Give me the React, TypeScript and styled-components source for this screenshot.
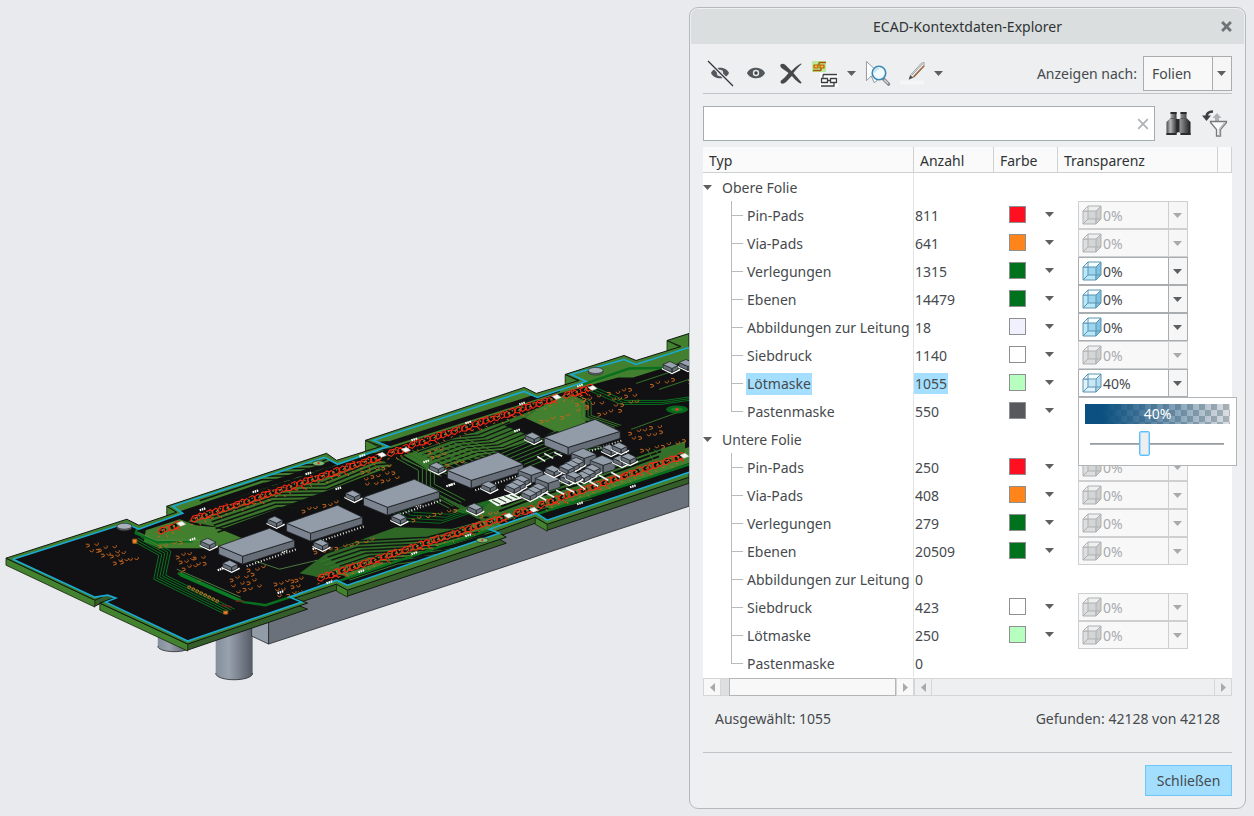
import React, { useState } from 'react';
import styled, { createGlobalStyle, css } from 'styled-components';

const GlobalStyle = createGlobalStyle`
  *, *::before, *::after { box-sizing: border-box; }
  body {
    margin: 0;
    background: #e9eaee;
    color: #464a4d;
    font: 14px/20px "Noto Sans", "Open Sans", sans-serif;
  }
  button, input, select { font: inherit; color: inherit; margin: 0; }
`;

/* ---------- data ---------- */

type Row = {
  name: string;
  count: number;
  color?: string;
  transparency?: number;
  enabled?: boolean;
  selected?: boolean;
};

type Group = { name: string; rows: Row[] };

const groups: Group[] = [
  {
    name: 'Obere Folie',
    rows: [
      { name: 'Pin-Pads', count: 811, color: '#ff0f1f', transparency: 0 },
      { name: 'Via-Pads', count: 641, color: '#ff8419', transparency: 0 },
      { name: 'Verlegungen', count: 1315, color: '#00711c', transparency: 0, enabled: true },
      { name: 'Ebenen', count: 14479, color: '#00711c', transparency: 0, enabled: true },
      { name: 'Abbildungen zur Leitung', count: 18, color: '#f0f0ff', transparency: 0, enabled: true },
      { name: 'Siebdruck', count: 1140, color: '#ffffff', transparency: 0 },
      { name: 'Lötmaske', count: 1055, color: '#b7ffbe', transparency: 40, enabled: true, selected: true },
      { name: 'Pastenmaske', count: 550, color: '#58595d' },
    ],
  },
  {
    name: 'Untere Folie',
    rows: [
      { name: 'Pin-Pads', count: 250, color: '#ff0f1f', transparency: 0 },
      { name: 'Via-Pads', count: 408, color: '#ff8419', transparency: 0 },
      { name: 'Verlegungen', count: 279, color: '#00711c', transparency: 0 },
      { name: 'Ebenen', count: 20509, color: '#00711c', transparency: 0 },
      { name: 'Abbildungen zur Leitung', count: 0 },
      { name: 'Siebdruck', count: 423, color: '#ffffff', transparency: 0 },
      { name: 'Lötmaske', count: 250, color: '#b7ffbe', transparency: 0 },
      { name: 'Pastenmaske', count: 0 },
    ],
  },
];

/* ---------- layout ---------- */

const Page = styled.main`
  display: grid;
  grid-template-columns: minmax(0, 1fr) minmax(520px, 557px);
  align-items: start;
  min-height: 100vh;
  padding-right: 8px;
`;

const Scene = styled.div`
  svg { display: block; width: 100%; height: auto; }
`;

const Dialog = styled.section`
  margin: 7px 0;
  padding: 1px;
  background: #eeeff1;
  border: 1px solid #b5b9bc;
  border-radius: 9px;
`;

const TitleBar = styled.header`
  display: grid;
  grid-template-columns: 36px 1fr 36px;
  align-items: center;
  height: 35px;
  background: #dadede;
  border-radius: 7px 7px 0 0;
`;

const Title = styled.h1`
  grid-column: 2;
  margin: 0;
  padding-top: 1px;
  font-size: 14px;
  font-weight: 400;
  line-height: 20px;
  text-align: center;
  color: #303335;
`;

const IconButton = styled.button`
  display: flex;
  align-items: center;
  justify-content: center;
  flex: none;
  padding: 0;
  border: 0;
  background: none;
  cursor: pointer;
`;

const Content = styled.div`
  padding: 12px 12px 11px;
`;

const Toolbar = styled.div`
  display: flex;
  align-items: center;
  padding-bottom: 2px;
  border-bottom: 1px solid #c1c4c6;
`;

const Tools = styled.div`
  display: flex;
  align-items: center;
  flex: 1;
  gap: 9px;
  padding-left: 4px;
`;

const ViewBy = styled.label`
  display: flex;
  align-items: center;
  gap: 6px;
`;

const SelectBox = styled.span<{ $tall?: boolean; $off?: boolean }>`
  display: grid;
  grid-template-columns: 1fr 19px;
  width: ${(p) => (p.$tall ? 89 : 110)}px;
  height: ${(p) => (p.$tall ? 35 : 28)}px;
  border: 1px solid ${(p) => (p.$off ? '#cdcfd0' : '#a9adaf')};
  background: ${(p) => (p.$tall || p.$off ? '#f8f8f9' : '#fff')};
  color: ${(p) => (p.$off ? '#a9abad' : '#464a4d')};

  > svg { grid-area: 1 / 2; place-self: center; pointer-events: none; }
`;

const NativeSelect = styled.select<{ $indent: number; $off?: boolean }>`
  grid-area: 1 / 1 / 2 / 3;
  width: 100%;
  padding: 1px 0 0 ${(p) => p.$indent}px;
  appearance: none;
  border: 0;
  border-radius: 0;
  color: inherit;
  opacity: 1;
  outline-offset: -2px;
  background: linear-gradient(90deg, ${(p) => (p.$off ? '#cdcfd0' : '#a9adaf')} 1px, #f6f6f7 1px) right / 19px 100% no-repeat;
`;

const CubeSlot = styled.span`
  grid-area: 1 / 1;
  place-self: center start;
  display: flex;
  padding-left: 3px;
  pointer-events: none;
`;

const SearchRow = styled.div`
  display: flex;
  align-items: center;
  gap: 10px;
  margin: 12px 4px 6px 0;
`;

const SearchField = styled.div`
  display: flex;
  flex: 1;
  align-items: center;
  height: 35px;
  padding-right: 5px;
  background: #fff;
  border: 1px solid #a2afae;
`;

const SearchInput = styled.input`
  flex: 1;
  min-width: 0;
  height: 100%;
  padding: 0 8px;
  border: 0;
  background: transparent;
`;

const Table = styled.table`
  width: 100%;
  table-layout: fixed;
  border-collapse: separate;
  border-spacing: 0;
  background: #fff;
`;

const HeadCell = styled.th`
  height: 26px;
  padding: 2px 6px 0;
  background: #fafafa;
  border-right: 1px solid #cfd1d3;
  border-bottom: 1px solid #cfd1d3;
  font-weight: 400;
  text-align: left;
  color: #303335;
`;

const Cell = styled.td<{ $line?: boolean; $indent?: number; $text?: boolean }>`
  height: 28px;
  padding: ${(p) => (p.$text ? 2 : 0)}px 0 0 ${(p) => p.$indent ?? 0}px;
  white-space: nowrap;
  ${(p) => p.$line && css`border-right: 1px solid #e2e4e6;`}
`;

const TreeItem = styled.div<{ $group?: boolean }>`
  display: flex;
  align-items: center;
  gap: ${(p) => (p.$group ? 10 : 3)}px;
  height: 28px;
  padding-left: ${(p) => (p.$group ? 0 : 28)}px;

  > :last-child { margin-top: 2px; }
`;

const Branch = styled.span<{ $last: boolean }>`
  flex: none;
  width: 12px;
  height: 28px;
  background:
    linear-gradient(#b9bcbe, #b9bcbe) 0 0 / 1px ${(p) => (p.$last ? '15px' : '28px')} no-repeat,
    linear-gradient(#b9bcbe, #b9bcbe) 0 14px / 12px 1px no-repeat;
`;

const Label = styled.span<{ $selected?: boolean }>`
  padding: 1px;
  background: ${(p) => (p.$selected ? '#a5dfff' : 'transparent')};
`;

const ColorButton = styled.button`
  display: flex;
  align-items: center;
  gap: 19px;
  height: 28px;
  padding: 0 0 2px;
  border: 0;
  background: none;
`;

const Swatch = styled.span<{ $color: string }>`
  width: 17px;
  height: 17px;
  border: 1px solid #8d8f91;
  background: ${(p) => p.$color};
`;

const ComboAnchor = styled.div`
  position: relative;
`;

const Popup = styled.div`
  position: absolute;
  z-index: 2;
  top: 28px;
  left: 0;
  width: 159px;
  height: 69px;
  padding: 6px;
  background: #fff;
  border: 1px solid #b2b5b7;
`;

const Preview = styled.div`
  height: 20px;
  color: #fff;
  text-align: center;
  background:
    linear-gradient(90deg, #0b5080 0%, #0b5080 12%, rgba(30, 90, 140, 0) 100%),
    repeating-conic-gradient(#a9b2b8 0% 25%, #dfe0e3 0% 50%) 0 0 / 12px 12px;
`;

const Slider = styled.input`
  display: block;
  width: 134px;
  height: 25px;
  margin: 7px 5px 0;
  appearance: none;
  background: linear-gradient(#8f9294, #b9bcbe) center / 100% 2px no-repeat;

  &::-webkit-slider-thumb {
    appearance: none;
    width: 11px;
    height: 25px;
    background: #eceef0;
    border: 1px solid #62bff5;
    border-radius: 2px;
    box-shadow: inset 0 0 0 1px #a4dcff;
  }
`;

const ScrollBars = styled.div`
  display: grid;
  grid-template-columns: 211px 1fr;
  height: 19px;
  background: #fff;
  padding-top: 1px;
`;

const ScrollBar = styled.div`
  display: flex;
  border: 1px solid #d4d6d8;
  background: #eeeff1;
`;

const ScrollArrow = styled.button<{ $active?: boolean; $end?: boolean }>`
  display: flex;
  align-items: center;
  justify-content: center;
  width: 17px;
  padding: 0;
  border: 0;
  border-${(p) => (p.$end ? 'left' : 'right')}: 1px solid #d4d6d8;
  background: ${(p) => (p.$active ? '#f8f8f8' : '#eeeff1')};
`;

const ScrollTrack = styled.div<{ $active?: boolean }>`
  display: flex;
  flex: 1;
  padding-left: 8px;
  background: ${(p) => (p.$active ? '#dddfe1' : 'transparent')};
`;

const ScrollThumb = styled.div`
  flex: 1;
  margin: -1px 0;
  background: #f8f8f8;
  border: 1px solid #b3b6b8;
`;

const Status = styled.div`
  display: flex;
  justify-content: space-between;
  padding: 13px 12px 23px;
  border-bottom: 1px solid #c1c4c6;
`;

const Actions = styled.footer`
  display: flex;
  justify-content: flex-end;
  padding-top: 12px;
`;

const CloseButton = styled.button`
  min-width: 87px;
  height: 31px;
  padding: 0 8px;
  background: #a2dfff;
  border: 1px solid #6dc6f7;
`;

/* ---------- icons ---------- */

const Caret = ({ off, dir = 'down' }: { off?: boolean; dir?: 'down' | 'left' | 'right' }) => {
  const d = { down: 'M0 2h9L4.500 7z', left: 'M7 0v9L2 4.500z', right: 'M2 0v9l5-4.500z' }[dir];
  return (
    <svg width="9" height="9" aria-hidden="true">
      <path d={d} fill={off ? '#a8aaac' : '#5d6062'} />
    </svg>
  );
};

const Cross = ({ size, color, weight }: { size: number; color: string; weight: number }) => (
  <svg width={size} height={size} viewBox="0 0 10 10" aria-hidden="true">
    <path d="M1 1l8 8M9 1L1 9" stroke={color} strokeWidth={weight} />
  </svg>
);

const EyeShape = () => (
  <>
    <path d="M4 13c3-7 15-7 18 0-3 7-15 7-18 0z" fill="#51575b" />
    <circle cx="13" cy="13" r="3.200" fill="#e5e8ea" />
    <circle cx="13" cy="13" r="1.700" fill="#3d4246" />
  </>
);

const HideIcon = () => (
  <svg width="27" height="27" viewBox="0 0 27 27">
    <EyeShape />
    <path d="M1 1l25 25" stroke="#eeeff1" strokeWidth="3.500" />
    <path d="M1 1l25 25" stroke="#303437" strokeWidth="1.300" />
  </svg>
);

const ShowIcon = () => (
  <svg width="27" height="27" viewBox="0 0 27 27"><EyeShape /></svg>
);

const DeleteIcon = () => (
  <svg width="24" height="25" viewBox="0 0 25 25" fill="#484848">
    <path d="M1.500 3.500C3.500 1 6.500 3 8 5l5 5C16 6.500 20 3 23 2l.6.600C20 6 17.500 8.500 15 12l8.500 10-.6 1c-3-1-7-5-9.500-8-3 2.500-5.500 6.500-8.500 8-2.500.6-4-1-3-3 2.500-2 5.500-4.500 8-8C7 9.500 0 6.500 1.500 3.500z" />
  </svg>
);

const NetsIcon = () => (
  <svg width="26" height="26" viewBox="0 0 26 26" fill="none">
    <path d="M0 0h14v11H0z" fill="#b9ea9c" />
    <path d="M1 9.500h8M7 1.500h7M7 1.500v3M9 9.500V7" stroke="#a85a00" strokeWidth="1.500" />
    <path d="M2 4h4v3H2zM8 4h4v3H8z" fill="#ffb52d" stroke="#b66100" strokeWidth="1.200" />
    <path d="M8 12h18v14H8z" fill="#fff" />
    <path d="M11 13.500h14M11 13.500v3M9 25h13v-3M9.500 17.500h6v4h-6zM18.500 17.500h6v4h-6zM15.500 19.500h3" stroke="#3c3f41" strokeWidth="1.300" />
  </svg>
);

const FindSelectIcon = () => (
  <svg width="26" height="27" viewBox="0 0 27 27" fill="none">
    <path d="M1.500 1v20l5-5 3 7 3-2-3-6h7z" fill="#fff" stroke="#93979a" />
    <path d="M19 19l5.500 5.500" stroke="#85898c" strokeWidth="3.500" strokeLinecap="round" />
    <path d="M20 20l4 4" stroke="#d9dbdc" strokeWidth="1.400" />
    <circle cx="14.500" cy="13" r="7" fill="#f3fafd" stroke="#3989b5" strokeWidth="1.700" />
    <path d="M10 12.500a4.500 4.500 0 0 1 4.500-4" stroke="#b8dff0" strokeWidth="1.500" />
  </svg>
);

const PencilIcon = () => (
  <svg width="25" height="25" viewBox="0 0 26 25" fill="none">
    <path d="M0 20h25v4H0z" fill="#f5f6f7" />
    <path d="M10 18l1-4L22 2l3-1v4L15 16z" fill="#f8f8f8" stroke="#85888a" strokeWidth=".8" />
    <path d="M14 16L25 4.500" stroke="#a06a45" strokeWidth="1.600" />
    <path d="M12 14.500L23.500 2.500" stroke="#8f9193" />
    <path d="M9 19l1.500-4.500 3.500 2z" fill="#4c4c4c" />
  </svg>
);

const BinocularsIcon = () => (
  <svg width="27" height="25" viewBox="0 0 26 25">
    <defs>
      <linearGradient id="barrel-left">
        <stop offset="0" stopColor="#4a4b4c" />
        <stop offset=".35" stopColor="#b4b6b7" />
        <stop offset="1" stopColor="#202122" />
      </linearGradient>
      <linearGradient id="barrel-right">
        <stop offset="0" stopColor="#a4a6a7" />
        <stop offset="1" stopColor="#1c1d1e" />
      </linearGradient>
    </defs>
    <path d="M5 1h6v7h1v14h-1v2H1V11l4-4z" fill="url(#barrel-left)" />
    <path d="M15 1h6v6l4 4v13H15v-2h-2V8h2z" fill="url(#barrel-right)" />
    <path d="M11 8h3v13h-3z" fill="#2a2b2c" />
    <path d="M5 1h6v2H5zM15 1h6v2h-6zM1 22h10v2H1zM15 22h10v2H15z" fill="#2b2c2d" />
    <path d="M5 7.500h6M15 7.500h6" stroke="#55585a" />
  </svg>
);

const FilterIcon = () => (
  <svg width="26" height="27" viewBox="0 0 26 27" fill="none">
    <path d="M11 1.500C7 1.500 4.500 3 4.500 7" stroke="#3d4042" strokeWidth="2.500" />
    <path d="M0 5.500h9L4.500 11z" fill="#3d4042" />
    <path d="M10.500 8L15 3l4.500 5H17v3h-4V8z" fill="#aeb1b3" />
    <path d="M8.500 11.500h16v1l-6 7V26h-4v-6.500l-6-7z" fill="#fafafa" stroke="#777a7c" strokeWidth="1.300" />
    <path d="M17.500 19l5.500-6.500M17.500 19v6.500" stroke="#b9bcbe" strokeWidth="1.500" />
  </svg>
);

const Cube = ({ off, faint }: { off?: boolean; faint?: boolean }) => {
  const c = off
    ? { a: '#eeefef', b: '#dddedf', c: '#cbcccd', s: '#aeb0b1' }
    : { a: '#f4fcff', b: faint ? '#dff3fb' : '#b9e8fa', c: faint ? '#b3dcee' : '#7fc2df', s: '#5c93b0' };
  return (
    <svg width="20" height="20" viewBox="0 0 20 20" stroke={c.s} strokeLinejoin="round">
      <path d="M1 6h13v13H1z" fill={c.b} />
      <path d="M1 6l5-5h13l-5 5z" fill={c.a} />
      <path d="M14 6l5-5v13l-5 5z" fill={c.c} />
      <path d="M6 6h8v8H6z" fill={c.c} stroke="none" opacity=".5" />
      <path d="M6 1v13h13M6 14l-5 5" fill="none" />
    </svg>
  );
};

/* ---------- circuit board model ---------- */

type Pt = [number, number];
const pts = (list: Pt[]) => list.map((p) => p.join(',')).join(' ');

const backEdge: Pt[] = [
  [6, 559], [127, 520], [139, 526], [177, 513], [167, 507], [327, 454], [337, 461], [382, 447],
  [366, 441], [525, 388], [537, 394], [580, 381], [566, 375], [625, 356], [637, 361], [682, 347],
  [668, 341], [690, 334],
];
const frontEdge: Pt[] = [
  [690, 478], [548, 525], [536, 518], [497, 532], [507, 538], [348, 591], [337, 585], [295, 599],
  [308, 604], [188, 645], [100, 604], [116, 598], [108, 595], [95, 601],
];
const innerBack: Pt[] = [
  [13, 560], [126, 524], [139, 530], [183, 514], [173, 507], [325, 458], [338, 465], [389, 447],
  [374, 441], [525, 392], [538, 398], [587, 382], [572, 375], [625, 360], [637, 365], [690, 348],
];
const innerFront: Pt[] = [
  [690, 473], [548, 521], [537, 514], [490, 530], [500, 534], [348, 586], [337, 581], [290, 598],
  [302, 603], [188, 642], [106, 603], [116, 599], [108, 596], [95, 598], [13, 560],
];

const rails: [Pt, Pt][] = [
  [[163, 531], [174, 527]], [[196, 519], [376, 459]], [[393, 453], [403, 450]],
  [[414, 445], [552, 400]], [[569, 395], [586, 390]], [[323, 578], [502, 519]],
  [[519, 513], [528, 511]], [[543, 505], [679, 458]],
];

const lerp = (a: Pt, b: Pt, t: number): Pt => [a[0] + (b[0] - a[0]) * t, a[1] + (b[1] - a[1]) * t];

/* pad outlines alternate between four slightly different shapes */
const padShapes = [
  'M-5 2l2-4 4-1 1 4-3 3-3-1zM1-2l3-3 3 1-1 4-3 2M-3 0l5-1',
  'M-5 1l3-3 3 2-1 4-4 0zM0-3l4-2 3 2-2 4-4 1M-1 4l4-2 3 2',
  'M-4 3l-1-3 4-3 3 2-2 4zM1-1l2-4 4 0 0 4-4 3zM0 3l3 3',
  'M-5 3l1-5 4 0 2 3-4 3zM2-3l4-1 1 3-4 3-3-2M-2-4l3 1',
];

const Rail = ({ a, b }: { a: Pt; b: Pt }) => {
  const n = Math.max(1, Math.round((b[0] - a[0]) / 10.500));
  return (
    <g fill="none">
      {Array.from({ length: n + 1 }, (_, i) => {
        const [x, y] = lerp(a, b, i / n);
        return (
          <g key={i} transform={`translate(${x} ${y})`}>
            <path d="M-3 1.500L3-1.500M-1-2l2 4" stroke="#0c0c0d" strokeWidth="3.500" />
            <path d={padShapes[i % 4]} stroke="#f52a14" strokeWidth="1.100" />
            <path d="M-1 1l2-2M3-2l1-1" stroke="#5b9a45" strokeWidth="1.200" />
            <path d={i % 2 ? 'M-2 6l2 1' : 'M4 5l1 2M-5 7l2-1'} stroke="#c7661f" />
          </g>
        );
      })}
    </g>
  );
};

const Traces = ({ d, n, dx, dy, color = '#438431', width = 1 }: {
  d: string; n: number; dx: number; dy: number; color?: string; width?: number;
}) => (
  <g fill="none" stroke={color} strokeWidth={width}>
    {Array.from({ length: n }, (_, i) => (
      <path key={i} d={d} transform={`translate(${i * dx} ${i * dy})`} />
    ))}
  </g>
);

/* x, y, columns, rows */
const viaFields: [number, number, number, number][] = [
  [86, 545, 2, 2], [97, 549, 3, 2], [108, 556, 3, 2], [120, 561, 3, 1], [157, 546, 4, 1], [174, 556, 3, 3], [193, 558, 2, 2],
  [229, 579, 4, 3], [272, 584, 4, 3], [291, 580, 2, 1], [360, 472, 5, 3], [426, 451, 3, 2],
  [608, 393, 4, 3], [650, 384, 4, 1], [596, 414, 4, 1], [629, 432, 5, 2], [640, 450, 7, 1],
  [300, 510, 6, 1], [314, 552, 9, 1], [411, 519, 7, 1], [538, 421, 5, 1], [446, 464, 3, 2],
  [582, 399, 3, 2], [574, 403, 2, 2], [247, 570, 3, 1], [688, 380, 1, 1],
  [688, 393, 1, 1], [480, 515, 3, 1],
];

const chips: Pt[] = [[219, 547], [287, 524], [364, 498], [448, 471], [545, 438]];

const smallParts: Pt[] = [
  [201, 542], [223, 564], [268, 520], [314, 543], [346, 494], [392, 517], [430, 466], [482, 485],
  [468, 507], [526, 436], [664, 365], [680, 363], [546, 469], [515, 479], [511, 483], [506, 486],
  [603, 448], [613, 446], [570, 461], [565, 464], [560, 467], [614, 459], [622, 457], [586, 468],
  [581, 472], [576, 475], [561, 477], [567, 475], [532, 487], [527, 490], [522, 493],
];
const blocks: Pt[] = [[519, 471], [536, 479], [572, 454], [591, 461]];
const silk: Pt[] = [
  [200, 511], [253, 493], [306, 475], [360, 457], [412, 441], [466, 424], [520, 405], [578, 387],
  [327, 584], [359, 573], [412, 555], [466, 537], [578, 505], [631, 488], [278, 594], [190, 541],
  [218, 571], [282, 553], [313, 550], [336, 490], [424, 463], [450, 486], [515, 432], [447, 487], [416, 507],
];

const Board = () => (
  <svg viewBox="0 0 690 816" role="img" aria-label="Leiterplatte">
    <defs>
      <linearGradient id="pillar">
        <stop offset="0" stopColor="#858e9b" />
        <stop offset=".35" stopColor="#98a1ae" />
        <stop offset="1" stopColor="#555b65" />
      </linearGradient>
      <clipPath id="top"><polygon points={pts([...innerBack, ...innerFront])} /></clipPath>
    </defs>
    <g stroke="#23272a" strokeWidth=".8">
      <path d="M158 630v17c0 7 32 8 32 0v-17z" fill="url(#pillar)" stroke="none" />
      <path d="M216 620v54c0 9 37 9 37 0v-54z" fill="url(#pillar)" stroke="none" />
      <path d="M158 647c0 7 32 8 32 0M216 674c0 9 37 9 37 0" fill="none" />
      <path d="M252 615v22l17 8v-30z" fill="#929ba8" />
      <path d="M269 610v35L690 507v-50z" fill="#6a717a" />
    </g>
    <polygon points={pts([...backEdge, ...frontEdge])} transform="translate(0 6)" fill="#355d29" stroke="#161b14" />
    <path d="M6 559l89 42v7L6 566zM100 604l88 41v7l-88-41zM337 585l11 6v7l-11-6zM536 518l12 7v7l-12-7zM167 507l10 6-10 4zM366 441l14 7-14 4zM566 375l14 7-14 4zM668 341l14 7-14 4z" fill="#43822f" stroke="#18220f" strokeWidth=".8" />
    <polygon points={pts([...backEdge, ...frontEdge])} fill="#427f2e" stroke="#0d150c" />
    <g clipPath="url(#top)">
      <polygon points={pts([...innerBack, ...innerFront])} fill="#111113" />
      {/* solder-mask strip along the back edge */}
      <path d="M172 507L325 458l13 7 51-18-14-6 150-49 13 6 49-16-14-7 52-15 12 5 55-18v13l-58 18h-15L560 394 400 446 184 515z" fill="#427f2e" />
      {/* copper areas */}
      <path d="M146 531l34-11 16 6 20 2 34 14-45 7h-46l-15-7z" fill="#427f2e" />
      <path d="M188 522L380 459l12 8-58 22-110 40z" fill="#3b752b" />
      <path d="M404 456L505 422l50-20 36 18-70 25-90 27z" fill="#35702a" />
      <path d="M546 405l22-11 18 8v20l14 8-24 8-52-18z" fill="#427f2e" />
      <path d="M314 578l100-38 60-16 56-20 165-58v16l-142 49-11-6-47 17 10 4-152 52-16-3z" fill="#427f2e" />
      <path d="M330 552l66-24 70 2-146 48-20-4z" fill="#2e6726" />
      <path d="M452 512l40-12 40-8 154-50v16l-180 62z" fill="#35702a" />
      <path d="M448 456l52-20 20 8-44 16z" fill="#3b752b" />
      <path d="M505 426l20-8 30 14-16 8z" fill="#111113" />
      {/* routed bundles */}
      <Traces d="M218 533l62-21 60-1 51-21 24-2" n={14} dx={-2} dy={-3.500} color="#0f1511" width={1.500} />
      <Traces d="M408 448l34-12 32-3 32-13" n={13} dx={5} dy={2.500} color="#111512" width={1.200} />
      <Traces d="M402 459l40 18M436 449l39 18" n={6} dx={6} dy={-2} color="#3d7a2d" />
      <Traces d="M320 563l48-16 66-10 60-18" n={10} dx={5} dy={3} color="#367c2d" />
      <Traces d="M320 552l30-10 78-4 45-12" n={8} dx={4} dy={3} color="#111613" width={1.400} />
      <Traces d="M383 505l22 17 36 2 44-15" n={4} dx={3} dy={-3} color="#09681e" />
      <Traces d="M397 459l22 12v22l31 16" n={5} dx={4} dy={-2} color="#367b2d" />
      <Traces d="M500 455l36-15 40-3" n={7} dx={5} dy={2} color="#367b2d" />
      <Traces d="M440 497l38 22 55-17 40-10" n={5} dx={5} dy={2} color="#316e29" />
      <Traces d="M500 512l40-15 60-18 60-22" n={4} dx={2} dy={-5} color="#0d120e" width={2} />
      <Traces d="M132 541l27 15-5 24 69 34" n={5} dx={3} dy={-1} color="#08761f" />
      <Traces d="M565 397l18 8v14l30 10" n={4} dx={3} dy={-1} color="#347229" />
      <Traces d="M590 391l32 14h40l28-4" n={3} dx={2} dy={-2} color="#08701e" />
      <path d="M138 527l-2 7 22 9 35-1M178 574l66 29 22 3 76-25 168-57 180-59M578 387l52-18 60-1" fill="none" stroke="#08701e" strokeWidth="2.500" />
      <path d="M138 533l18 8h46M177 570l64 28M250 560l30 10 38-9" fill="none" stroke="#5a944a" strokeWidth=".8" />
      <path d="M180 576l60 26M181 574l60 27" stroke="#0a7d24" strokeWidth="2" />
      <path d="M637 384l45-15M660 390l30-10M632 430l55-20M655 450l12 14M648 450l10 18" stroke="#347229" fill="none" />
      <path d="M178 522L390 451 562 396" stroke="#111113" strokeWidth="5" fill="none" transform="translate(-2 -6)" />
      <g transform="translate(678 410)">
        <ellipse rx="11" ry="4" fill="#07671d" /><ellipse rx="6" ry="2" fill="#16822b" /><circle r="1.500" fill="#ff2d20" />
      </g>
      {viaFields.map(([x, y, cols, rows], f) => (
        <g key={f} fill="none" stroke="#c4651f" strokeWidth="1">
          {Array.from({ length: cols * rows }, (_, i) => {
            const cx = x + (i % cols) * 7 + ((i * 5 + f) % 3) + Math.floor(i / cols) * 3;
            const cy = y - (i % cols) * 1.600 + Math.floor(i / cols) * 6 + ((i + f) % 2);
            return (
              <path key={i} d={i % 3 ? `M${cx} ${cy}a1.800 1.500 0 1 0 3-1` : `M${cx} ${cy}h3l.5 2-3 1`} />
            );
          })}
        </g>
      ))}
      <Traces d="M188 588a1.500 1.200 0 1 0 3 0a1.500 1.200 0 1 0-3 0" n={8} dx={4} dy={2} color="#d27b28" />
      <path d="M133 540h4v4h-4zM224 612h4v3h-4zM180 573h3M198 582h3" fill="#f08a24" stroke="#a8581c" />
      <path d="M236 602l8 0M222 606l10 2" stroke="#7d1c1d" strokeWidth="2" strokeDasharray="2 1" />
    </g>
    <polyline points={pts(innerBack)} fill="none" stroke="#19a9d4" strokeWidth="1.600" />
    <polyline points={pts(innerFront)} fill="none" stroke="#19a9d4" strokeWidth="1.600" />
    {rails.map(([a, b], i) => <Rail key={i} a={a} b={b} />)}
    <g fill="#f5f5f5">
      {([[177, 525], [378, 456], [402, 451], [553, 398], [589, 389], [505, 517], [530, 511], [681, 457]] as Pt[]).map(([x, y]) => (
        <path key={x} d={`M${x} ${y - 1}l5-2 4 3-5 2z`} stroke="#ccb" strokeWidth=".5" />
      ))}
    </g>
    <g stroke="#fff" strokeWidth="2.200" strokeDasharray="1.500 .7">
      {silk.map(([x, y], i) => <path key={i} d={`M${x} ${y}l6-2`} />)}
    </g>
    <path d="M489 501l24-7 10 5-25 8z" fill="#f4f4f4" />
    <path d="M493 501l8 4M499 499l8 4M505 497l8 4M511 496l7 3" stroke="#2a5a26" strokeWidth="1.200" />
    <g stroke="#f4f4f4" strokeWidth="1.600">
      <path d="M508 490l6 4M538 496l9 5M546 493l9 5M557 491l8 4M567 489l8 4M578 484l8 6M590 482l9 5M600 476l9 5M612 473l9 5M538 457l8 5M545 454l9 5M555 453l8 4M620 450l8 3" />
    </g>
    {chips.map(([x, y]) => (
      <g key={x} transform={`translate(${x} ${y})`} stroke="#1d2023" strokeWidth=".8" strokeLinejoin="round">
        <path d="M28 20l50-17" stroke="#e9e9e9" strokeWidth="2" strokeDasharray="1 2" />
        <path d="M0 0v8l24 10V10z" fill="#7b8490" />
        <path d="M24 10v8l52-17v-7z" fill="#666d76" />
        <path d="M0 0l51-18 25 12-52 16z" fill="#929ba8" />
      </g>
    ))}
    {blocks.map(([x, y]) => (
      <g key={x} transform={`translate(${x} ${y})`} stroke="#1d2023" strokeWidth=".7">
        <path d="M0 0v7l13 6V5zM13 5v8l12-4V1z" fill="#69717b" />
        <path d="M0 0l12-5 13 6-12 4z" fill="#929ba8" />
      </g>
    ))}
    {smallParts.map(([x, y], i) => (
      <g key={i} transform={`translate(${x} ${y})`}>
        <path d="M-1 4l10 5 8-4" fill="none" stroke="#fff" strokeWidth="1.600" />
        <g stroke="#1d2023" strokeWidth=".7">
          <path d="M0 0v4l9 4V4zM9 4v4l6-3V1z" fill="#69717b" />
          <path d="M0 0l7-3 8 4-6 3z" fill="#98a1ae" />
        </g>
      </g>
    ))}
    <g stroke="#222" strokeWidth=".7">
      <ellipse cx="124.500" cy="528.500" rx="7.500" ry="3" fill="#6f7882" />
      <ellipse cx="124.500" cy="527" rx="7.500" ry="3" fill="#a8b0bb" />
      <ellipse cx="596.500" cy="372.500" rx="7.500" ry="3" fill="#6f7882" />
      <ellipse cx="596.500" cy="371" rx="7.500" ry="3" fill="#a8b0bb" />
      <ellipse cx="319" cy="464" rx="6" ry="2.500" fill="#79bf76" />
      <ellipse cx="483" cy="541" rx="6" ry="2.500" fill="#79bf76" />
    </g>
    <path d="M318 464h2M482 541h2" stroke="#e22" strokeWidth="2" />
  </svg>
);

/* ---------- dialog parts ---------- */

const TransparencyCell = ({ row, group }: { row: Row; group: string }) => {
  const [value, setValue] = useState(row.transparency ?? 0);
  if (row.transparency === undefined) return null;
  const off = !row.enabled;
  return (
    <ComboAnchor>
      <SelectBox $off={off}>
        <NativeSelect
          $indent={24}
          $off={off}
          disabled={off}
          aria-label={`Transparenz ${group} ${row.name}`}
          value={value}
          onChange={(e) => setValue(Number(e.target.value))}
        >
          {Array.from(new Set([0, 20, 40, 60, 80, 100, value])).map((v) => (
            <option key={v} value={v}>{v}%</option>
          ))}
        </NativeSelect>
        <CubeSlot><Cube off={off} faint={value > 0} /></CubeSlot>
        <Caret off={off} />
      </SelectBox>
      {row.selected && (
        <Popup>
          <Preview>{value}%</Preview>
          <Slider
            type="range"
            min={0}
            max={100}
            value={value}
            aria-label="Transparenz"
            onChange={(e) => setValue(Number(e.target.value))}
          />
        </Popup>
      )}
    </ComboAnchor>
  );
};

const GroupRows = ({ group }: { group: Group }) => (
  <>
    <tr>
      <Cell $line><TreeItem $group><Caret /><span>{group.name}</span></TreeItem></Cell>
      <Cell colSpan={4} />
    </tr>
    {group.rows.map((row, i) => (
      <tr key={row.name}>
        <Cell $line>
          <TreeItem>
            <Branch $last={i === group.rows.length - 1} />
            <Label $selected={row.selected}>{row.name}</Label>
          </TreeItem>
        </Cell>
        <Cell $text><Label $selected={row.selected}>{row.count}</Label></Cell>
        <Cell $indent={15}>
          {row.color && (
            <ColorButton aria-label={`Farbe ${row.name}`}><Swatch $color={row.color} /><Caret /></ColorButton>
          )}
        </Cell>
        <Cell $indent={20} colSpan={2}><TransparencyCell row={row} group={group.name} /></Cell>
      </tr>
    ))}
  </>
);

export default function App() {
  const [query, setQuery] = useState('');
  return (
    <>
      <GlobalStyle />
      <Page>
        <Scene><Board /></Scene>
        <Dialog aria-labelledby="dialog-title">
          <TitleBar>
            <Title id="dialog-title">ECAD-Kontextdaten-Explorer</Title>
            <IconButton aria-label="Fenster schließen"><Cross size={11} color="#6f7375" weight={2.600} /></IconButton>
          </TitleBar>
          <Content>
            <Toolbar>
              <Tools>
                <IconButton aria-label="Ausblenden"><HideIcon /></IconButton>
                <IconButton aria-label="Einblenden"><ShowIcon /></IconButton>
                <IconButton aria-label="Entfernen"><DeleteIcon /></IconButton>
                <IconButton aria-label="Netze"><NetsIcon /></IconButton>
                <IconButton aria-label="Netzoptionen"><Caret /></IconButton>
                <IconButton aria-label="Suchen und auswählen"><FindSelectIcon /></IconButton>
                <IconButton aria-label="Bearbeiten"><PencilIcon /></IconButton>
                <IconButton aria-label="Bearbeitungsoptionen"><Caret /></IconButton>
              </Tools>
              <ViewBy>
                Anzeigen nach:
                <SelectBox $tall>
                  <NativeSelect $indent={8} defaultValue="Folien">
                    <option>Folien</option>
                  </NativeSelect>
                  <Caret />
                </SelectBox>
              </ViewBy>
            </Toolbar>
            <SearchRow>
              <SearchField>
                <SearchInput aria-label="Suchen" value={query} onChange={(e) => setQuery(e.target.value)} />
                <IconButton aria-label="Suche löschen" onClick={() => setQuery('')}>
                  <Cross size={12} color="#b0b3b5" weight={1.500} />
                </IconButton>
              </SearchField>
              <IconButton aria-label="Suchen starten"><BinocularsIcon /></IconButton>
              <IconButton aria-label="Filter zurücksetzen"><FilterIcon /></IconButton>
            </SearchRow>
            <Table>
              <colgroup>
                <col style={{ width: 211 }} />
                <col style={{ width: 80 }} />
                <col style={{ width: 64 }} />
                <col />
                <col style={{ width: 14 }} />
              </colgroup>
              <thead>
                <tr>
                  <HeadCell scope="col">Typ</HeadCell>
                  <HeadCell scope="col">Anzahl</HeadCell>
                  <HeadCell scope="col">Farbe</HeadCell>
                  <HeadCell scope="col">Transparenz</HeadCell>
                  <HeadCell as="td" />
                </tr>
              </thead>
              <tbody>
                {groups.map((g) => <GroupRows key={g.name} group={g} />)}
              </tbody>
            </Table>
            <ScrollBars>
              <ScrollBar>
                <ScrollArrow $active aria-label="Typ nach links"><Caret off dir="left" /></ScrollArrow>
                <ScrollTrack $active><ScrollThumb /></ScrollTrack>
                <ScrollArrow $active $end aria-label="Typ nach rechts"><Caret off dir="right" /></ScrollArrow>
              </ScrollBar>
              <ScrollBar>
                <ScrollArrow aria-label="Nach links"><Caret off dir="left" /></ScrollArrow>
                <ScrollTrack />
                <ScrollArrow $end aria-label="Nach rechts"><Caret off dir="right" /></ScrollArrow>
              </ScrollBar>
            </ScrollBars>
            <Status>
              <span>Ausgewählt: 1055</span>
              <span>Gefunden: 42128 von 42128</span>
            </Status>
            <Actions><CloseButton>Schließen</CloseButton></Actions>
          </Content>
        </Dialog>
      </Page>
    </>
  );
}
